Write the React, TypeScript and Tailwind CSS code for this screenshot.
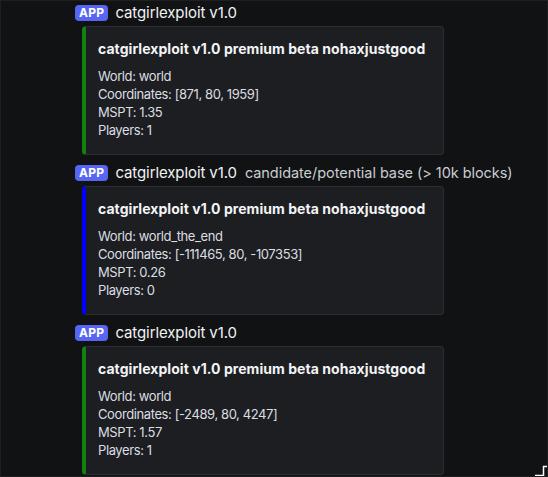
import React from 'react';

const embeds = [
  {
    subtitle: '',
    color: 'border-l-[#0f820f]',
    world: 'world',
    coords: '[871, 80, 1959]',
    mspt: '1.35',
    players: '1',
  },
  {
    subtitle: 'candidate/potential base (> 10k blocks)',
    color: 'border-l-[#0000ff]',
    world: 'world_the_end',
    coords: '[-111465, 80, -107353]',
    mspt: '0.26',
    players: '0',
  },
  {
    subtitle: '',
    color: 'border-l-[#0f820f]',
    world: 'world',
    coords: '[-2489, 80, 4247]',
    mspt: '1.57',
    players: '1',
  },
];

function Message({ e }: { e: (typeof embeds)[number] }) {
  return (
    <div className="flex flex-col">
      <div className="flex items-center h-6 pl-[74px]">
        <span className="bg-[#5865f2] text-white text-[12px] font-bold leading-4 h-4 px-[4px] rounded-[4px] flex items-center tracking-wide">
          APP
        </span>
        <span className="ml-[7px] text-[15px] text-[#f2f3f5] tracking-[-0.1px]">catgirlexploit v1.0</span>
        {e.subtitle && (
          <span className="ml-[8px] text-[14.5px] text-[#c9cdd2] tracking-[-0.05px]">{e.subtitle}</span>
        )}
      </div>
      <div
        className={`ml-[81px] mt-[1px] w-[362px] h-[129px] bg-[#1d1e21] border border-[#2c2e33] border-l-4 ${e.color} rounded-[4px] pl-3 pt-3`}
      >
        <div className="text-[14px] font-bold text-[#f2f3f5] leading-5 tracking-[0.05px]">
          catgirlexploit v1.0 premium beta nohaxjustgood
        </div>
        <div className="mt-2 text-[13px] leading-[18px] text-[#dbdee1] tracking-[-0.4px]">
          <div>World: {e.world}</div>
          <div>Coordinates: {e.coords}</div>
          <div>MSPT: {e.mspt}</div>
          <div>Players: {e.players}</div>
        </div>
      </div>
    </div>
  );
}

export default function App() {
  return (
    <div
      className="relative w-[548px] h-[477px] bg-[#111213] border border-[#1e1f21] overflow-hidden flex flex-col gap-[6px]"
      style={{ fontFamily: 'Inter, "Noto Sans", sans-serif' }}
    >
      {embeds.map((e, i) => (
        <Message key={i} e={e} />
      ))}
      <svg className="absolute right-0 bottom-0" width="12" height="11" viewBox="0 0 12 11">
        <path d="M0 10.5 H8.5 V1.5 H12" fill="none" stroke="white" strokeWidth="1.5" />
      </svg>
    </div>
  );
}
